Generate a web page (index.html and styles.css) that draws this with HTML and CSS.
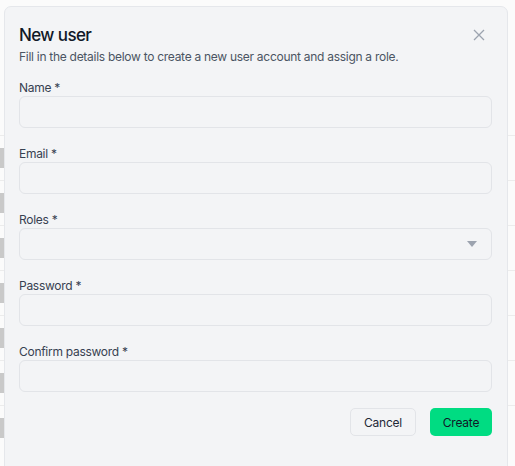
FILE: index.html
```html
<!DOCTYPE html>
<html lang="en">
<head>
  <meta charset="UTF-8">
  <meta name="viewport" content="width=device-width, initial-scale=1.0">
  <title>New user</title>
  <link rel="stylesheet" href="styles.css">
</head>
<body>
  <div class="backdrop">
    <div class="row"><span class="tag"></span></div>
    <div class="row"><span class="tag"></span></div>
    <div class="row"><span class="tag"></span></div>
    <div class="row"><span class="tag"></span></div>
    <div class="row"><span class="tag"></span></div>
    <div class="row"><span class="tag"></span></div>
    <div class="row"><span class="tag"></span></div>
  </div>

  <div class="dialog">
    <div class="dialog-header">
      <h2>New user</h2>
      <button class="close" aria-label="Close">
        <svg width="12" height="12" viewBox="0 0 12 12">
          <path d="M1 1 L11 11 M11 1 L1 11" stroke="#9ca3af" stroke-width="1.3" fill="none"/>
        </svg>
      </button>
    </div>
    <p class="subtitle">Fill in the details below to create a new user account and assign a role.</p>

    <form class="form">
      <div class="field">
        <label>Name *</label>
        <input type="text">
      </div>
      <div class="field">
        <label>Email *</label>
        <input type="email">
      </div>
      <div class="field">
        <label>Roles *</label>
        <div class="select">
          <svg width="10" height="6" viewBox="0 0 10 6"><path d="M0 0 H10 L5 6 Z" fill="#9ca3af"/></svg>
        </div>
      </div>
      <div class="field">
        <label>Password *</label>
        <input type="password">
      </div>
      <div class="field">
        <label>Confirm password *</label>
        <input type="password">
      </div>

      <div class="actions">
        <button type="button" class="btn btn-cancel">Cancel</button>
        <button type="button" class="btn btn-create">Create</button>
      </div>
    </form>
  </div>
</body>
</html>
```

FILE: styles.css
```css
body {
  margin: 0;
  font-family: Inter, "Noto Sans", sans-serif;
  background-color: #fbfbfb;
  color: #111827;
  height: 466px;
  overflow: hidden;
}

.backdrop {
  padding-top: 135px;
}

.row {
  height: 44px;
  border-top: 1px solid #ececec;
  display: flex;
  align-items: center;
}

.tag {
  width: 4px;
  height: 20px;
  background-color: #c9c9c9;
}

.dialog {
  position: absolute;
  top: 6px;
  left: 4px;
  width: 504px;
  height: 480px;
  box-sizing: border-box;
  padding: 16px 15px 0 14px;
  background-color: #f3f4f6;
  border: 1px solid #e5e7eb;
  border-radius: 7px;
  letter-spacing: -0.28px;
}

.dialog-header {
  display: flex;
  justify-content: space-between;
  align-items: center;
  height: 24px;
}

.dialog-header h2 {
  margin: 0;
  font-size: 17px;
  font-weight: 500;
  line-height: 24px;
  letter-spacing: -0.6px;
  color: #111827;
}

.close {
  border: none;
  background: none;
  padding: 0;
  width: 12px;
  height: 12px;
  margin-right: 7px;
  display: flex;
}

.subtitle {
  margin: 2px 0 0;
  font-size: 12px;
  line-height: 16px;
  color: #4b5563;
}

.form {
  margin-top: 15px;
  display: flex;
  flex-direction: column;
  gap: 18px;
}

.field {
  display: flex;
  flex-direction: column;
}

.field label {
  font-size: 12px;
  line-height: 16px;
  font-weight: 400;
  color: #374151;
}

.field input,
.select {
  height: 32px;
  box-sizing: border-box;
  border: 1px solid #e2e4e8;
  border-radius: 6px;
  background-color: #f3f4f6;
  font-family: inherit;
  font-size: 12px;
  padding: 0 10px;
  margin: 0;
}

.select {
  display: flex;
  align-items: center;
  justify-content: flex-end;
  padding-right: 14px;
}

.actions {
  display: flex;
  justify-content: flex-end;
  gap: 14px;
  margin-top: -2px;
}

.btn {
  height: 28px;
  padding: 0 10px;
  font-family: inherit;
  font-size: 12px;
  letter-spacing: -0.2px;
  border-radius: 5px;
  color: #1f2937;
  cursor: pointer;
}

.btn-cancel {
  width: 66px;
  background-color: #f3f4f6;
  border: 1px solid #e2e4e8;
}

.btn-create {
  width: 62px;
  background-color: #00dc82;
  border: none;
  color: #111827;
}
```
